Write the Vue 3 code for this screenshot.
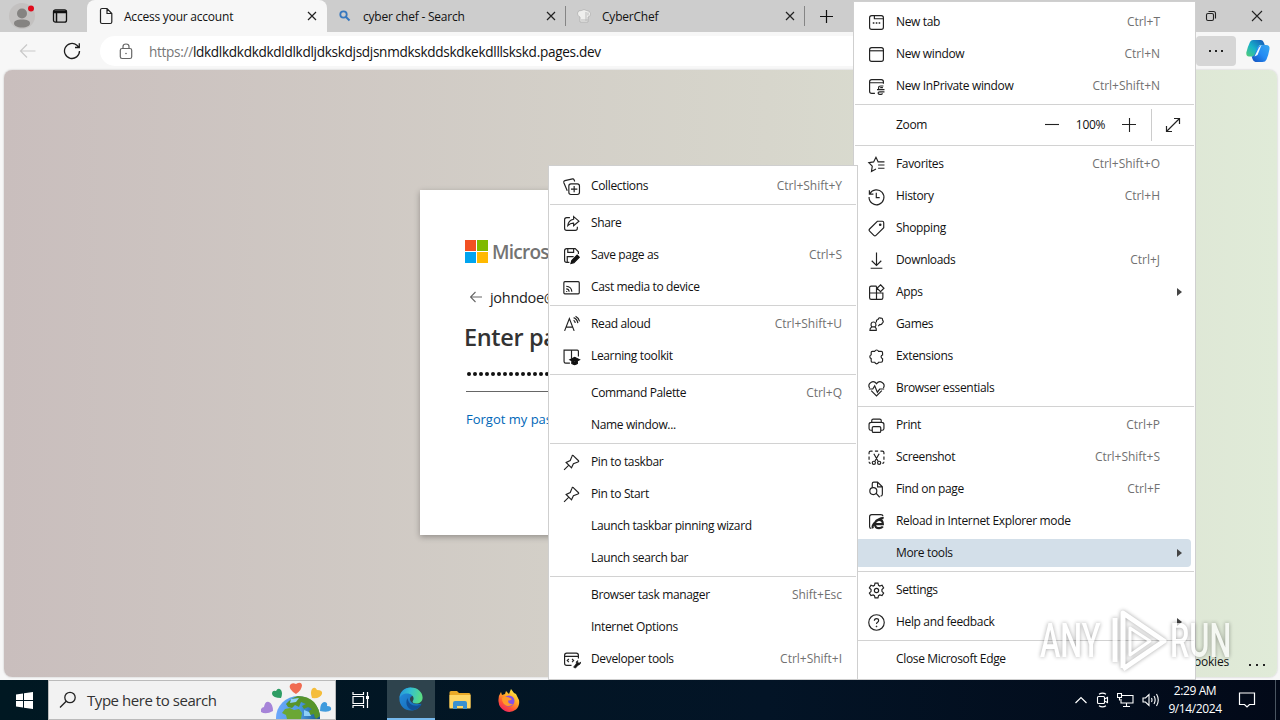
<template>
  <div class="desktop">
    <div class="browser">
      <div class="tab-bar">
        <div class="profile">
          <svg width="30" height="30" viewBox="0 0 30 30">
            <circle cx="14" cy="15" r="13" fill="#c3c1c0" />
            <circle cx="14" cy="12.500" r="5" fill="#858381" />
            <path d="M6 22.500c0-3 3-4 8-4s8 1 8 4c0 2-3 4-8 4s-8-2-8-4z" fill="#858381" />
            <circle cx="23" cy="7.500" r="3" fill="#e00b1c" />
          </svg>
        </div>
        <div class="tab-actions">
          <svg width="16" height="16" viewBox="0 0 16 16" fill="none" stroke="#111" stroke-width="1.300">
            <rect x="1.500" y="1.800" width="13" height="12.400" rx="2" />
            <path d="M1.500 3.300h13M1.500 4.500h13M4.500 4v10" stroke-width="1.500" />
          </svg>
        </div>
        <div class="tab active">
          <svg class="tab-icon" width="16" height="18" viewBox="0 0 16 18" fill="none" stroke="#222" stroke-width="1.200">
            <path d="M4 1.500h5l4.800 5v8.500q0 1.500-1.500 1.500h-8.300q-1.500 0-1.500-1.500v-12q0-1.500 1.500-1.500zM9 1.500v5h4.800" />
          </svg>
          <span class="tab-title">Access your account</span>
          <svg class="tab-close" width="10" height="10" viewBox="0 0 10 10"><path d="M1 1l8 8M9 1l-8 8" stroke="#222" stroke-width="1.200" /></svg>
        </div>
        <div class="tab">
          <svg class="tab-icon" width="16" height="16" viewBox="0 0 16 16" fill="none" stroke="#3677be">
            <circle cx="6.500" cy="6.500" r="3.200" stroke-width="1.800" /><path d="M9 9l3.500 3.500" stroke-width="2" />
          </svg>
          <span class="tab-title">cyber chef - Search</span>
          <svg class="tab-close" width="10" height="10" viewBox="0 0 10 10"><path d="M1 1l8 8M9 1l-8 8" stroke="#222" stroke-width="1.200" /></svg>
        </div>
        <div class="tab divided">
          <svg class="tab-icon" width="16" height="16" viewBox="0 0 16 16">
            <path d="M4 14V9Q1 8 1.500 5t4-2.500q2.500-2 5 0Q14 2.500 14.500 5.500T12 9v5z" fill="#efefed" stroke="#aaa" stroke-width=".7" />
            <path d="M10 4v9M12 4.500v3M5 12h7" stroke="#bbb" fill="none" />
          </svg>
          <span class="tab-title">CyberChef</span>
          <svg class="tab-close" width="10" height="10" viewBox="0 0 10 10"><path d="M1 1l8 8M9 1l-8 8" stroke="#222" stroke-width="1.200" /></svg>
        </div>
        <div class="new-tab">
          <svg width="15" height="15" viewBox="0 0 15 15"><path d="M7.500 1v13M1 7.500h13" stroke="#111" stroke-width="1.200" /></svg>
        </div>
        <div class="window-buttons">
          <svg width="12" height="12" viewBox="0 0 12 12" fill="none" stroke="#222" stroke-width="1.100">
            <rect x="1.500" y="3.500" width="7" height="7" rx="1.500" /><path d="M3.500 1.500h5q2 0 2 2v5" />
          </svg>
          <svg width="12" height="12" viewBox="0 0 12 12"><path d="M1 1l10 10M11 1l-10 10" stroke="#222" stroke-width="1.100" /></svg>
        </div>
      </div>

      <div class="toolbar">
        <svg class="back" width="18" height="16" viewBox="0 0 18 16" fill="none" stroke="#c9c9c9" stroke-width="1.200"><path d="M8 1.500l-6.500 6.500 6.500 6.500M1.500 8h15" /></svg>
        <svg class="reload" width="18" height="18" viewBox="0 0 18 18" fill="none" stroke="#1d1d1d" stroke-width="1.300"><path d="M16.500 9a7.500 7.500 0 1 1-2.600-5.700l2 2M16.300 1.200v4.300h-4.300" /></svg>
        <div class="address">
          <svg width="14" height="17" viewBox="0 0 14 17" fill="none" stroke="#666" stroke-width="1.200">
            <rect x="1.300" y="5.500" width="11.400" height="10" rx="1.800" /><path d="M4 5.500v-2q0-2.500 3-2.500t3 2.500v2" /><circle cx="7" cy="10.500" r=".8" fill="#666" stroke="none" />
          </svg>
          <span class="url"><span class="scheme">https://</span>ldkdlkdkdkdkdldlkdljdkskdjsdjsnmdkskddskdkekdlllskskd.pages.dev</span>
        </div>
        <div class="more-button"><i></i><i></i><i></i></div>
        <svg class="copilot" width="26" height="26" viewBox="0 0 26 26">
          <defs>
            <linearGradient id="cpA" x1="0" y1="1" x2="1" y2="0"><stop offset="0" stop-color="#53cd75" /><stop offset=".45" stop-color="#18b2c9" /><stop offset="1" stop-color="#1550b7" /></linearGradient>
            <linearGradient id="cpB" x1="0" y1="1" x2="1" y2="0"><stop offset="0" stop-color="#124dbb" /><stop offset=".5" stop-color="#248bf4" /><stop offset="1" stop-color="#36a7ef" /></linearGradient>
          </defs>
          <path d="M8 2h8q2 0 3 3l.7 2h-4q-2 0-3 3l-2 6q-1 2.500-3 2.500H4q-3 0-2.700-4Q3 8 5 4q1-2 3-2z" fill="url(#cpA)" />
          <path d="M18 7h3q4 0 3.500 4-1 6-3 10.500-1 2.500-4 2.500h-7q-2 0-3-3l-.8-2.500q2.500 0 3.500-3l2-6q1-2.500 5.800-2.500z" fill="url(#cpB)" />
          <path d="M14 9.500l2.500-2.500-4 10-3 1.500z" fill="#f4fbff" />
        </svg>
      </div>

      <div class="page">
        <div class="login">
          <div class="brand">
            <span class="squares"><i></i><i></i><i></i><i></i></span>
            <span class="brand-name">Microsoft</span>
          </div>
          <div class="identity">
            <svg width="12" height="12" viewBox="0 0 12 12" fill="none" stroke="#666" stroke-width="1.100"><path d="M5.500 1l-5 5 5 5M.5 6h11.500" /></svg>
            <span>johndoe@</span>
          </div>
          <h1>Enter pa</h1>
          <div class="password"><i v-for="n in 22" :key="n"></i></div>
          <a class="forgot">Forgot my pas</a>
        </div>
        <footer><span>cookies</span><b><i></i><i></i><i></i></b></footer>
      </div>
    </div>

    <div class="menu main-menu">
      <template v-for="(item, i) in mainMenu" :key="i">
        <div v-if="item.type === 'line'" class="line"></div>
        <div v-else-if="item.type === 'zoom'" class="zoom-row">
          <span class="label">Zoom</span>
          <svg width="14" height="14" viewBox="0 0 14 14"><path d="M0 6.500h14" stroke="#222" stroke-width="1.100" /></svg>
          <span class="percent">100%</span>
          <svg width="14" height="14" viewBox="0 0 14 14"><path d="M0 6.500h14M7.500 0v14" stroke="#222" stroke-width="1.100" /></svg>
          <span class="full">
            <svg width="16" height="16" viewBox="0 0 16 16" fill="none" stroke="#222" stroke-width="1.200"><path d="M1.500 14.500l13-13M9 1.500h5.500v5.500M1.500 9v5.500h5.500" /></svg>
          </span>
        </div>
        <div v-else class="item" :class="{ selected: item.selected }">
          <svg class="icon" viewBox="0 0 16 16" v-html="icons[item.icon]"></svg>
          <span class="label">{{ item.label }}</span>
          <span class="key">{{ item.key }}</span>
          <span v-if="item.sub" class="arrow"></span>
        </div>
      </template>
    </div>

    <div class="menu sub-menu">
      <template v-for="(item, i) in subMenu" :key="i">
        <div v-if="item.type === 'line'" class="line"></div>
        <div v-else class="item">
          <svg class="icon" viewBox="0 0 16 16" v-html="icons[item.icon]"></svg>
          <span class="label">{{ item.label }}</span>
          <span class="key">{{ item.key }}</span>
        </div>
      </template>
    </div>

    <div class="taskbar">
      <div class="start">
        <svg width="17" height="17" viewBox="0 0 17 17" fill="#fff"><path d="M0 2.500l7-1v6.500H0zM8 1.300l9-1.300v8H8zM0 9h7v6.500l-7-1zM8 9h9v8l-9-1.300z" /></svg>
      </div>
      <div class="search">
        <svg class="loupe" width="18" height="18" viewBox="0 0 18 18" fill="none" stroke="#222" stroke-width="1.300"><circle cx="11" cy="6.500" r="5.200" /><path d="M7.200 10.300l-6.200 6.200" /></svg>
        <span>Type here to search</span>
        <svg class="earth" width="72" height="38" viewBox="0 0 72 38">
          <defs>
            <linearGradient id="sea" x1="0" y1="0" x2="1" y2="0"><stop offset="0" stop-color="#6da7fb" /><stop offset=".5" stop-color="#4f9fe8" /><stop offset="1" stop-color="#16568f" /></linearGradient>
          </defs>
          <circle cx="37" cy="37" r="22" fill="url(#sea)" />
          <path d="M25 23q5-6 12-8 10 0 16 6 5 6 6 14l-4 3q-2-2-2-5l-4 1-1-4 3-2-4-2-4 2-2-3 4-2-5-2-2 5-4-2-3 3-4-1z" fill="#57942a" />
          <path d="M21 32l3-4 5-1 4 2 5-1 3 4-1 6H26l-1-4z" fill="#6ba734" />
          <path d="M30 18l8-1-3 4-6 1zM43 29l5 2 2 4h-7z" fill="#8ed0f7" />
          <path d="M35 13q-8-5-6-9 2-3 6-1 5-3 6 1 0 5-6 9z" fill="#f06b51" />
          <path d="M20 17q-8 0-9-4 0-4 4-3 2-4 5-1 2 3 0 8z" fill="#2e9d64" />
          <path d="M51 17q-2-6 0-9 3-3 5 1 6 0 5 4-2 5-10 4z" fill="#f5bd3b" />
          <path d="M12 30q-7 4-12 1-1-4 3-5 1-6 5-5 4 2 4 9z" fill="#a684d8" />
          <path d="M59 30q0-8 4-9 4 0 3 4 5 0 4 4-3 3-11 1z" fill="#3f9bdd" />
        </svg>
      </div>
      <div class="task">
        <svg width="18" height="18" viewBox="0 0 18 18" fill="none" stroke="#fff" stroke-width="1.200"><path d="M1 1v2.500h10.500V1M1 17v-2.500h10.500V17M1 5.500h10.500v7H1zM15.500 1v16" /><path d="M14 6.500h3" stroke-width="3" /></svg>
      </div>
      <div class="task running">
        <svg width="24" height="24" viewBox="0 0 24 24">
          <defs>
            <linearGradient id="edA" x1="0" y1="0" x2="1" y2=".2"><stop offset="0" stop-color="#2391dc" /><stop offset=".5" stop-color="#34c0cf" /><stop offset="1" stop-color="#58dc86" /></linearGradient>
            <linearGradient id="edB" x1="0" y1="0" x2="1" y2="1"><stop offset="0" stop-color="#2590e0" /><stop offset="1" stop-color="#1263ae" /></linearGradient>
          </defs>
          <path d="M.4 12C.4 5 5 .4 12 .4L14 9q-2.500-.5-3 2.500c-.5 4 4.500 6.500 11.500 5.300C20.500 21 17 23.600 12 23.600 5.500 23.600.4 18.500.4 12z" fill="url(#edB)" />
          <path d="M.5 11C1 4.500 6 .4 12 .4c7 0 11.600 5 11.600 10 0 4-3 6-6.500 6-2.500 0-3.500-1-3.500-2 0-.8 1-1.200 1-3 0-2.800-2.800-5-6.600-5C4.500 6.400 1.500 8.500.5 11z" fill="url(#edA)" />
          <path d="M8.500 11c-3 6 .5 11.500 5.500 12.200 4-.5 7-3 8.500-6-7 3.500-13 .5-14-6.200z" fill="#114f96" />
        </svg>
      </div>
      <div class="task">
        <svg width="22" height="20" viewBox="0 0 22 20">
          <path d="M.5 2.500q0-1.500 1.500-1.500h6l2 2h10q1.500 0 1.500 1.500v13H.5z" fill="#eaaa28" />
          <path d="M.5 5h21v13.500H.5z" fill="#ffd766" />
          <path d="M4 19v-6q0-2 2-2h10q2 0 2 2v6h-4v-3H8v3z" fill="#3b91d0" />
        </svg>
      </div>
      <div class="task">
        <svg width="24" height="24" viewBox="0 0 24 24">
          <defs>
            <linearGradient id="fx" x1=".8" y1="0" x2=".2" y2="1"><stop offset="0" stop-color="#fff34a" /><stop offset=".4" stop-color="#ffaa26" /><stop offset=".7" stop-color="#ff5634" /><stop offset="1" stop-color="#ed1a6a" /></linearGradient>
          </defs>
          <path d="M4 4l1 3 3-1 1-3 3 3 2-5 3 4 2 1 3 6q1 6-3 9.500-5 4-11 1.500-6-3-6.500-9.500Q1 8 4 4z" fill="url(#fx)" />
          <circle cx="12" cy="13" r="5.500" fill="#8151e7" />
          <path d="M5 10q3-2 7-.5l3 1.500q-2 2-4 1.500 0 4 5 3.500-3 3-7 1.500-4-2-4-7.500z" fill="#ff9a2a" />
        </svg>
      </div>
      <div class="tray">
        <svg width="12" height="12" viewBox="0 0 12 12" fill="none" stroke="#fff" stroke-width="1.200"><path d="M.5 9l5.500-5.500L11.500 9" /></svg>
        <svg width="14" height="16" viewBox="0 0 14 16" fill="none" stroke="#fff" stroke-width="1.100"><rect x="2.500" y="4.500" width="7" height="7" rx="1" /><path d="M9.500 7l3-1.500v5l-3-1.500M4 2.300q3.500-2.300 7 0M4 13.700q3.500 2.300 7 0" /></svg>
        <svg width="17" height="16" viewBox="0 0 17 16" fill="none" stroke="#fff" stroke-width="1.100"><path d="M5 3.500h11v7.500H4V7M9.500 11v3.500M6 14.500h7M.5 1.500h4v4h-4zM2.500 5.500v3" /></svg>
        <svg width="18" height="16" viewBox="0 0 18 16" fill="none" stroke="#fff" stroke-width="1.100"><path d="M1 6h2.500L7 2.500v11L3.500 10H1zM9.500 6q1 2 0 4M12 4q2.300 4 0 8M14.500 2q3.500 6 0 12" /></svg>
      </div>
      <div class="clock"><span>2:29 AM</span><span>9/14/2024</span></div>
      <svg class="notice" width="18" height="18" viewBox="0 0 18 18" fill="none" stroke="#fff" stroke-width="1.200"><path d="M1.500 2h15v11.500h-5L9 16l-2.500-2.500h-5z" /></svg>
      <div class="show-desktop"></div>
    </div>

    <div class="watermark">
      <span>ANY</span>
      <svg width="62" height="66" viewBox="0 0 62 66" fill="none" stroke="#fff" stroke-linejoin="round">
        <path d="M9 10v44M17 60V5l41 28-41 28" stroke-width="5" />
        <path d="M24 20l20 13-20 14z" stroke-width="3" />
      </svg>
      <span>RUN</span>
    </div>
  </div>
</template>

<script setup>
const icons = {
  newTab: '<rect x="1.500" y="1.500" width="13" height="13" rx="2"/><path d="M6 1.500V4.500h8.500"/><path d="M4.500 8.500h1.500M7.300 8.500h1.500M10 8.500h1.500" stroke-width="1.500"/>',
  window: '<rect x="1.500" y="1.500" width="13" height="13" rx="2"/><path d="M1.500 4.500h13"/>',
  inPrivate: '<path d="M6.500 14.500h-3q-2 0-2-2v-9q0-2 2-2h9q2 0 2 2v2M1.500 4.500h13M14.500 7.500h-2.500q-2 0-2 1.500v2M8.500 11h7M11.500 9h2.500M15.500 13h-4.500q-1.500 0-1.500 1.200t1.500 1.200h1.500q1 0 1-1"/>',
  favorites: '<path d="M9.500 5.500L7.500 1.200 5.300 5.600.8 6.300l3.200 3.200L3.300 14.500l4.200-2.200M9 5.500h6.500M9.500 8.500h6M9.500 11.500h6"/>',
  history: '<path d="M1.300 2v3.800h3.800M1.800 5.500A7 7 0 1 1 1 8.500M7.800 4.500v4.500h3.200"/>',
  shopping: '<path d="M8.800 1.200h4.700q1.300 0 1.300 1.300v4.700L7.500 14.500q-1 1-2 0L1.500 10.500q-1-1 0-2z"/><circle cx="11.500" cy="4.500" r=".7" fill="#222"/>',
  downloads: '<path d="M8 .5v12M3.500 8.200L8 12.700l4.500-4.500M2.500 15.300h11"/>',
  apps: '<path d="M8 2H3Q1.500 2 1.500 3.500v9.500Q1.500 14.500 3 14.500h9.500q1.500 0 1.500-1.500V8.500H1.500M8 2v12.500M11.800.7l3.200 3.300-3.200 3.300L8.500 4z"/>',
  games: '<path d="M1.800 13.500h6q.5-2-1.300-3.200 1.400-1.200.9-2.800a2.300 2.300 0 0 0-4.500 0q-.3 1.600.6 2.800-1.900 1.200-1.700 3.200zM3.800 10.300h2.500M8 6Q7.500 3.300 9.500 3.300q.5-2 2.300-1.300 2-.3 1.900 1.800 1.500 1.800-.3 3-.5 1.700-2.300 1.200l-1.500 1.500"/>',
  extensions: '<path d="M4 3.200h2.300a1.900 1.900 0 0 1 3.600 0h2.600q1.200 0 1.200 1.200v2.200a1.800 1.800 0 0 0 0 3.500v2q0 1.300-1.300 1.300H10a1.900 1.900 0 0 1-3.700 0H4.200Q3 13.400 3 12.200V10a1.900 1.900 0 0 1 0-3.600V4.300Q3 3.200 4 3.200z"/>',
  essentials: '<path d="M1.500 7.500C-1 3 5-.5 8 3.500c3-4 9-.5 6.500 4M3 10l5 5 5-5M.8 8.500h3.700L6.300 5.500l2.500 6L11 8.500h4.200"/>',
  print: '<path d="M4 12.500H2.700Q1 12.500 1 10.800V7q0-2 2-2h10q2 0 2 2v3.800q0 1.700-1.700 1.700H12M3.500 5V3.500q0-1.500 1.500-1.500h6q1.500 0 1.500 1.500V5"/><rect x="4" y="9" width="8" height="5.500" rx="1.200"/>',
  screenshot: '<path d="M1 5V3.500Q1 2 2.500 2h1.800M6.500 2h3M11.700 2h1.800Q15 2 15 3.500V5M15 7v3M15 12q0 1.500-1.500 1.500M1 7v3M1 12q0 1.500 1.500 1.500M5.500 4.500l4 7M10.500 4.500l-4 7"/><circle cx="5.500" cy="13" r="1.500"/><circle cx="10.500" cy="13" r="1.500"/>',
  find: '<path d="M4 6V2.500Q4 1 5.500 1H9l4.500 4.500v7q0 1.700-1.700 1.700M9 1v4.500h4.500M7.500 11.500l3.500 3.800"/><circle cx="5" cy="9.500" r="3.300"/>',
  ie: '<path d="M3 14.500q-1.500 0-1.500-1.500V3.500q0-2 2-2H12q2 0 2 1.500"/><path d="M6.500 10.500h7.500q0-4-3.500-4t-4 4q0 3.700 4 3.700 2.500 0 3.500-1.500M4.500 14.500q-1-3 3-6.500 4.500-4 7.200-3" stroke-width="2"/>',
  settings: '<circle cx="8" cy="8" r="2"/><path d="M6.600 1h2.800l.5 2.100 1.200.7 2.100-.7 1.500 2.500-1.600 1.500v1.700l1.600 1.600-1.500 2.400-2.100-.6-1.200.7-.5 2.100H6.600l-.5-2.100-1.200-.7-2.100.6-1.500-2.400 1.600-1.600V7.100L1.300 5.600l1.500-2.500 2.100.7 1.200-.7z"/>',
  help: '<circle cx="8" cy="8" r="7.300"/><path d="M6 6.300q0-2 2-2t2 1.800q0 1-1 1.700T8 9.500"/><circle cx="8" cy="11.700" r=".5" fill="#222" stroke-width=".6"/>',
  collections: '<rect x="5.500" y="5.500" width="10" height="10" rx="2"/><path d="M10.500 7.500v6M7.500 10.500h6M4 12L.8 4.500q-.5-1.500 1-2L9 .8q1-.2 1.500 1l.5 1.500"/>',
  share: '<path d="M6.500 2.500h-3q-2 0-2 2v8q0 2 2 2h8q2 0 2-2v-1.500M10 1.500l5 4.300-5 4.300V7.700Q7 7.500 4.500 10q.5-5 5.500-6z"/>',
  save: '<path d="M6 14.500H3.500q-2 0-2-2v-9q0-2 2-2h8l3 3v2M4.500 1.500V5h5.500V1.500M4 14.500V9h6"/><path d="M7.500 15.500l.8-2.800 5-5 2 2-5 5z" fill="#111" stroke="#111"/>',
  cast: '<rect x=".8" y="2.500" width="14.500" height="11.500" rx="1"/><path d="M3 11.800h1M3 9.300q2.500 0 2.800 2.700M3 6.800q5 .2 5.300 5.200"/>',
  read: '<path d="M1.500 14L6 2.500 10.500 14M3 10.500h6M10 4q1.500 1 1.500 2.700M10 1.500q3.500 1.500 4 5.200M11.800.3q3 1.500 3.800 4.700"/>',
  learning: '<path d="M8 9V2H1v10.800Q1 14.300 2.500 14.300H6.500M8 2h5.500q1 0 1 1v5M8 2v8"/><path d="M6.500 11L11 8.800l4.500 2.200-4.500 2.200zM8.300 12.500v2.200q2.700 1.800 5.200 0v-2.200" fill="#111" stroke="#111"/>',
  pin: '<path d="M1 15l4.500-4.500M3 8l5 5 1.800-3.800 4.300-1.700q1.200-.5.3-1.400L9.900 1.700q-1-.9-1.400.3L6.800 6.200z"/>',
  developer: '<path d="M8 13.500H3.500q-2 0-2-2V4q0-2 2-2h9q2 0 2 2v3M1.500 5h13M5.500 7.500L4 9l1.500 1.500M8.500 7.500L10 9l-1.500 1.500"/><path d="M10 15.200l2.500-3.200q-.5-2 1.300-3v2l1.700.5 1-1.200q.2 2.500-2.300 3l-2.500 2.800z" fill="#111" stroke-width=".8"/>'
}

const line = { type: 'line' }

const mainMenu = [
  { label: 'New tab', icon: 'newTab', key: 'Ctrl+T' },
  { label: 'New window', icon: 'window', key: 'Ctrl+N' },
  { label: 'New InPrivate window', icon: 'inPrivate', key: 'Ctrl+Shift+N' },
  line,
  { type: 'zoom' },
  line,
  { label: 'Favorites', icon: 'favorites', key: 'Ctrl+Shift+O' },
  { label: 'History', icon: 'history', key: 'Ctrl+H' },
  { label: 'Shopping', icon: 'shopping' },
  { label: 'Downloads', icon: 'downloads', key: 'Ctrl+J' },
  { label: 'Apps', icon: 'apps', sub: true },
  { label: 'Games', icon: 'games' },
  { label: 'Extensions', icon: 'extensions' },
  { label: 'Browser essentials', icon: 'essentials' },
  line,
  { label: 'Print', icon: 'print', key: 'Ctrl+P' },
  { label: 'Screenshot', icon: 'screenshot', key: 'Ctrl+Shift+S' },
  { label: 'Find on page', icon: 'find', key: 'Ctrl+F' },
  { label: 'Reload in Internet Explorer mode', icon: 'ie' },
  { label: 'More tools', sub: true, selected: true },
  line,
  { label: 'Settings', icon: 'settings' },
  { label: 'Help and feedback', icon: 'help', sub: true },
  line,
  { label: 'Close Microsoft Edge' }
]

const subMenu = [
  { label: 'Collections', icon: 'collections', key: 'Ctrl+Shift+Y' },
  line,
  { label: 'Share', icon: 'share' },
  { label: 'Save page as', icon: 'save', key: 'Ctrl+S' },
  { label: 'Cast media to device', icon: 'cast' },
  line,
  { label: 'Read aloud', icon: 'read', key: 'Ctrl+Shift+U' },
  { label: 'Learning toolkit', icon: 'learning' },
  line,
  { label: 'Command Palette', key: 'Ctrl+Q' },
  { label: 'Name window...' },
  line,
  { label: 'Pin to taskbar', icon: 'pin' },
  { label: 'Pin to Start', icon: 'pin' },
  { label: 'Launch taskbar pinning wizard' },
  { label: 'Launch search bar' },
  line,
  { label: 'Browser task manager', key: 'Shift+Esc' },
  { label: 'Internet Options' },
  { label: 'Developer tools', icon: 'developer', key: 'Ctrl+Shift+I' }
]
</script>

<style>
body { margin: 0; overflow: hidden; }
</style>

<style scoped>
* { box-sizing: border-box; }
.desktop {
  position: relative; width: 1280px; height: 720px; overflow: hidden; display: flex; flex-direction: column;
  font-family: "Open Sans", "Noto Sans", sans-serif; font-size: 12px; color: #111;
}
svg { flex: none; display: block; }
.browser { height: 680px; background: #f7f7f7; display: flex; flex-direction: column; }

.tab-bar { height: 32px; background: #cdcdcd; display: flex; align-items: center; }
.profile { width: 44px; padding-left: 8px; }
.tab-actions { width: 43px; padding-left: 8px; }
.tab { width: 239px; height: 32px; display: flex; align-items: center; padding: 0 10px; }
.tab.active { width: 240px; background: #f7f7f7; border-radius: 8px 8px 0 0; padding-left: 11px; }
.tab-title { flex: 1; margin-left: 10px; letter-spacing: -0.22px; white-space: nowrap; }
.divided { position: relative; }
.divided::before, .divided::after { content: ""; position: absolute; top: 6px; left: -1px; width: 1px; height: 20px; background: #858585; }
.divided::after { left: 238px; }
.new-tab { margin-left: 14px; }
.window-buttons { margin-left: auto; margin-right: 17px; display: flex; gap: 34px; }

.toolbar { height: 38px; display: flex; align-items: center; }
.back { margin-left: 19px; }
.reload { margin-left: 26px; }
.address { width: 1090px; height: 30px; margin-left: 19px; background: #fff; border-radius: 15px; display: flex; align-items: center; padding-left: 19px; }
.url { margin-left: 16px; font-size: 13.6px; letter-spacing: -0.31px; white-space: nowrap; }
.scheme { color: #777; }
.more-button { width: 40px; height: 30px; margin-left: 6px; flex: none; background: #d6d6d6; border-radius: 4px; display: flex; justify-content: center; align-items: center; gap: 4px; }
.more-button i { width: 2px; height: 2px; background: #222; }
.copilot { margin-left: 9px; }

.page {
  margin: 0 3px 3px 4px; height: 607px; border-radius: 8px; box-shadow: 0 0 2px #bbb;
  background: linear-gradient(90deg, #c9bebd, #d7d6cc 60%, #e0ebd8);
  padding: 120px 0 0 416px; display: flex; flex-direction: column; position: relative;
}
.login { width: 440px; height: 345px; padding: 50px 45px; background: #fff; box-shadow: 0 2px 6px rgba(0, 0, 0, 0.3); display: flex; flex-direction: column; white-space: nowrap; }
.brand { display: flex; align-items: center; height: 23px; }
.squares { width: 23px; height: 23px; display: grid; grid-template-columns: 11px 11px; gap: 1px; }
.squares i:nth-child(1) { background: #f25022; }
.squares i:nth-child(2) { background: #7fba00; }
.squares i:nth-child(3) { background: #00a4ef; }
.squares i:nth-child(4) { background: #ffb900; }
.brand-name { margin-left: 4px; font-size: 19px; font-weight: 600; letter-spacing: -0.75px; color: #737373; }
.identity { display: flex; align-items: center; gap: 8px; height: 22px; margin: 23px 0 0 5px; font-size: 14.5px; letter-spacing: -0.3px; color: #222; }
h1 { margin: 13px 0 0 -1px; font-size: 23.5px; line-height: 32px; font-weight: 600; letter-spacing: -0.35px; color: #333; }
.password { height: 39px; margin: 0 0 0 1px; border-bottom: 1px solid #666; display: flex; gap: 2px; align-items: center; padding: 4px 0 0 1px; }
.password i { width: 4px; height: 4px; border-radius: 2px; background: #111; flex: none; }
.forgot { margin: 17px 0 0 1px; font-size: 13px; line-height: 20px; color: #0067b8; }
footer { position: absolute; right: 12px; bottom: 6px; display: flex; gap: 20px; line-height: 18px; letter-spacing: -0.2px; }
footer b { display: flex; gap: 5px; align-items: flex-end; padding-bottom: 5px; }
footer b i { width: 2px; height: 2px; background: #222; }

.menu { position: absolute; background: #fff; border: 1px solid #cfcfcf; padding-top: 3px; display: flex; flex-direction: column; }
.main-menu { left: 853px; top: 1px; width: 343px; height: 679px; padding-top: 4px; }
.sub-menu { left: 548px; top: 165px; width: 310px; height: 515px; padding-top: 4px; }
.line { height: 1px; flex: none; margin: 2px 1px; background: #d2d2d2; }
.item { height: 32px; flex: none; display: flex; align-items: center; position: relative; padding: 0 35px 0 14px; }
.sub-menu .item { padding-right: 15px; }
.icon { width: 17px; height: 17px; margin-right: -1px; fill: none; stroke: #222; stroke-width: 1.1; overflow: visible; }
.label { margin-left: 12px; padding-bottom: 2px; letter-spacing: -0.35px; white-space: nowrap; }
.key { margin-left: auto; padding-bottom: 2px; color: #717171; white-space: nowrap; letter-spacing: -0.02px; }
.arrow { position: absolute; right: 13px; top: 12px; border: 4px solid transparent; border-left: 5px solid #444; border-right: 0; }
.selected { height: 28px; margin: 2px 4px 2px 1px; padding-left: 13px; background: #d3dfe9; border-radius: 4px; }
.selected .arrow { right: 9px; top: 10px; }
.zoom-row { height: 36px; flex: none; display: flex; align-items: center; padding-left: 42px; }
.zoom-row .label { margin: 0; width: 149px; }
.percent { width: 63px; padding-bottom: 2px; text-align: center; letter-spacing: -0.3px; }
.full { margin-left: 15px; padding-left: 13px; height: 32px; border-left: 1px solid #ccc; display: flex; align-items: center; }

.taskbar { height: 40px; background: linear-gradient(90deg, #001822, #031426 60%, #020918); display: flex; align-items: center; color: #fff; }
.start { width: 48px; display: flex; justify-content: center; }
.search { width: 288px; height: 40px; background: #f2f2f2; border: 1px solid #bbb; display: flex; align-items: center; color: #333; font-size: 15px; }
.search span { letter-spacing: -0.45px; margin-left: 10px; white-space: nowrap; }
.loupe { margin-left: 10px; }
.earth { margin-left: auto; margin-right: 2px; }
.task { width: 49px; height: 40px; display: flex; align-items: center; justify-content: center; }
.task.running { width: 48px; margin-left: 2px; background: #2e434d; border-bottom: 2px solid #76b9ed; }
.tray { margin-left: auto; display: flex; align-items: center; gap: 8px; }
.clock { width: 70px; display: flex; flex-direction: column; align-items: center; line-height: 18px; letter-spacing: -0.4px; }
.notice { margin: 0 19px 0 8px; }
.show-desktop { width: 5px; height: 40px; border-left: 1px solid #4a5561; }

.watermark { position: absolute; left: 1040px; top: 608px; width: 194px; height: 66px; display: flex; align-items: center; justify-content: space-between; opacity: 0.7; filter: drop-shadow(0 0 2px rgba(0, 0, 0, 0.5)); }
.watermark span { width: 64px; font: 500 48px/66px Roboto, sans-serif; color: #fff; transform: scaleX(0.64); transform-origin: 0 50%; }
</style>
